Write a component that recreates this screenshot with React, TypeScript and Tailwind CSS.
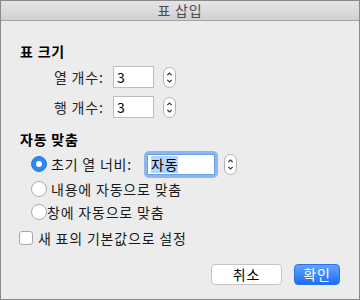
const Stepper = () => (
  <svg width="13" height="21" viewBox="0 0 13 21" className="shrink-0">
    <rect x="0.5" y="0.5" width="12" height="20" rx="6" fill="#fff" stroke="#b3b3b3" />
    <path d="M4.3 8.2 L6.5 6 L8.7 8.2" fill="none" stroke="#333" strokeWidth="1.2" />
    <path d="M4.3 12.8 L6.5 15 L8.7 12.8" fill="none" stroke="#333" strokeWidth="1.2" />
  </svg>
);

const Radio = ({ checked }: { checked?: boolean }) =>
  checked ? (
    <span className="w-[16px] h-[16px] rounded-full bg-[#2f87f6] border border-[#2a78e0] flex items-center justify-center shrink-0">
      <span className="w-[6px] h-[6px] rounded-full bg-white" />
    </span>
  ) : (
    <span className="w-[16px] h-[16px] rounded-full bg-white border border-[#ababab] shrink-0" />
  );

const SizeRow = ({ label }: { label: string }) => (
  <div className="flex items-center h-[22px]">
    <span className="ml-[53px] w-[59px] text-[#262626]">{label}</span>
    <div className="w-[41px] h-[22px] bg-white border border-[#bdbdbd] flex items-center pl-[3px] text-black">
      3
    </div>
    <div className="ml-[9px]">
      <Stepper />
    </div>
  </div>
);

export default function App() {
  return (
    <div
      className="w-[360px] h-[300px] border border-[#8a8a8a] bg-[#ececec] flex flex-col text-[14px] leading-[17px] tracking-[0.8px] text-black"
      style={{ fontFamily: '"Noto Sans CJK KR", "Noto Sans", sans-serif' }}
    >
      <div className="h-[20px] border-b border-[#a3a3a3] bg-gradient-to-b from-[#e6e4e6] to-[#d2d0d2] flex items-center justify-center text-[#4d4d4d]">
        표 삽입
      </div>

      <div className="ml-[19px] mt-[22px] font-bold">표 크기</div>

      <div className="mt-[6px] flex flex-col gap-[8px]">
        <SizeRow label="열 개수:" />
        <SizeRow label="행 개수:" />
      </div>

      <div className="ml-[19px] mt-[13px] font-bold">자동 맞춤</div>

      <div className="mt-[2px] flex items-center h-[28px] ml-[30px]">
        <Radio checked />
        <span className="ml-[4px] w-[83px] text-[#1a1a1a]">초기 열 너비:</span>
        <div className="ml-[10px] w-[74px] h-[27px] rounded-[5px] bg-[#8ab8f2] p-[3px]">
          <div className="w-full h-full bg-white border border-[#6aa0e6] flex items-center pl-[3px]">
            <span className="bg-[#b3d4fc] text-black">자동</span>
          </div>
        </div>
        <div className="ml-[6px]">
          <Stepper />
        </div>
      </div>

      <div className="flex items-center h-[22px] ml-[30px]">
        <Radio />
        <span className="ml-[4px] text-[#1a1a1a]">내용에 자동으로 맞춤</span>
      </div>

      <div className="mt-[1px] flex items-center h-[22px] ml-[30px]">
        <Radio />
        <span className="text-[#1a1a1a]">창에 자동으로 맞춤</span>
      </div>

      <div className="mt-[4px] flex items-center h-[22px] ml-[18px]">
        <span className="w-[14px] h-[14px] rounded-[3px] bg-white border border-[#a8a8a8] shrink-0" />
        <span className="ml-[5px] text-[#1a1a1a]">새 표의 기본값으로 설정</span>
      </div>

      <div className="mt-[15px] flex justify-end pr-[19px] gap-[12px]">
        <button className="w-[71px] h-[21px] rounded-[4px] bg-white border border-[#c4c4c4] flex items-center justify-center text-black tracking-[0.8px]">
          취소
        </button>
        <button className="w-[46px] h-[21px] rounded-[4px] bg-gradient-to-b from-[#60a4fc] to-[#1b6ef5] border border-[#2c74e6] flex items-center justify-center text-white tracking-[0.8px]">
          확인
        </button>
      </div>
    </div>
  );
}
